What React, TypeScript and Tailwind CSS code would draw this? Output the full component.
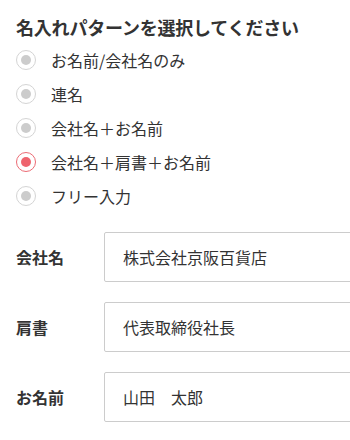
import { useState } from "react";

const patterns = [
  "お名前/会社名のみ",
  "連名",
  "会社名＋お名前",
  "会社名＋肩書＋お名前",
  "フリー入力",
];

const fields = [
  { label: "会社名", value: "株式会社京阪百貨店" },
  { label: "肩書", value: "代表取締役社長" },
  { label: "お名前", value: "山田　太郎" },
];

export default function App() {
  const [selected, setSelected] = useState(3);

  return (
    <div
      className="w-[350px] h-[440px] overflow-hidden bg-white text-[#333] pl-4 pt-[13px]"
      style={{ fontFamily: '"Noto Sans CJK JP", "Noto Sans", sans-serif' }}
    >
      <h2 className="text-[18px] font-bold leading-[28px] tracking-[-0.2px]">
        名入れパターンを選択してください
      </h2>

      {/* pattern radios */}
      <div className="mt-[2px] flex flex-col">
        {patterns.map((p, i) => {
          const active = i === selected;
          return (
            <label
              key={p}
              onClick={() => setSelected(i)}
              className="flex h-[34px] items-center gap-[15px] cursor-pointer"
            >
              <span
                className={`flex h-[20px] w-[20px] items-center justify-center rounded-full border ${
                  active ? "border-[#ec6b74]" : "border-[#d4d4d4]"
                }`}
              >
                <span
                  className={`h-[10px] w-[10px] rounded-full ${
                    active ? "bg-[#ee646e]" : "bg-[#cccccc]"
                  }`}
                />
              </span>
              <span className="text-[16px] leading-none">{p}</span>
            </label>
          );
        })}
      </div>

      {/* name fields */}
      <div className="mt-[19px] flex flex-col gap-[20px]">
        {fields.map((f) => (
          <div key={f.label} className="flex items-center">
            <span className="w-[88px] shrink-0 text-[16px] font-bold">
              {f.label}
            </span>
            <input
              defaultValue={f.value}
              className="h-[50px] w-[270px] shrink-0 rounded-[2px] border border-[#cccccc] px-[18px] text-[16px] text-[#333] outline-none"
            />
          </div>
        ))}
      </div>
    </div>
  );
}
